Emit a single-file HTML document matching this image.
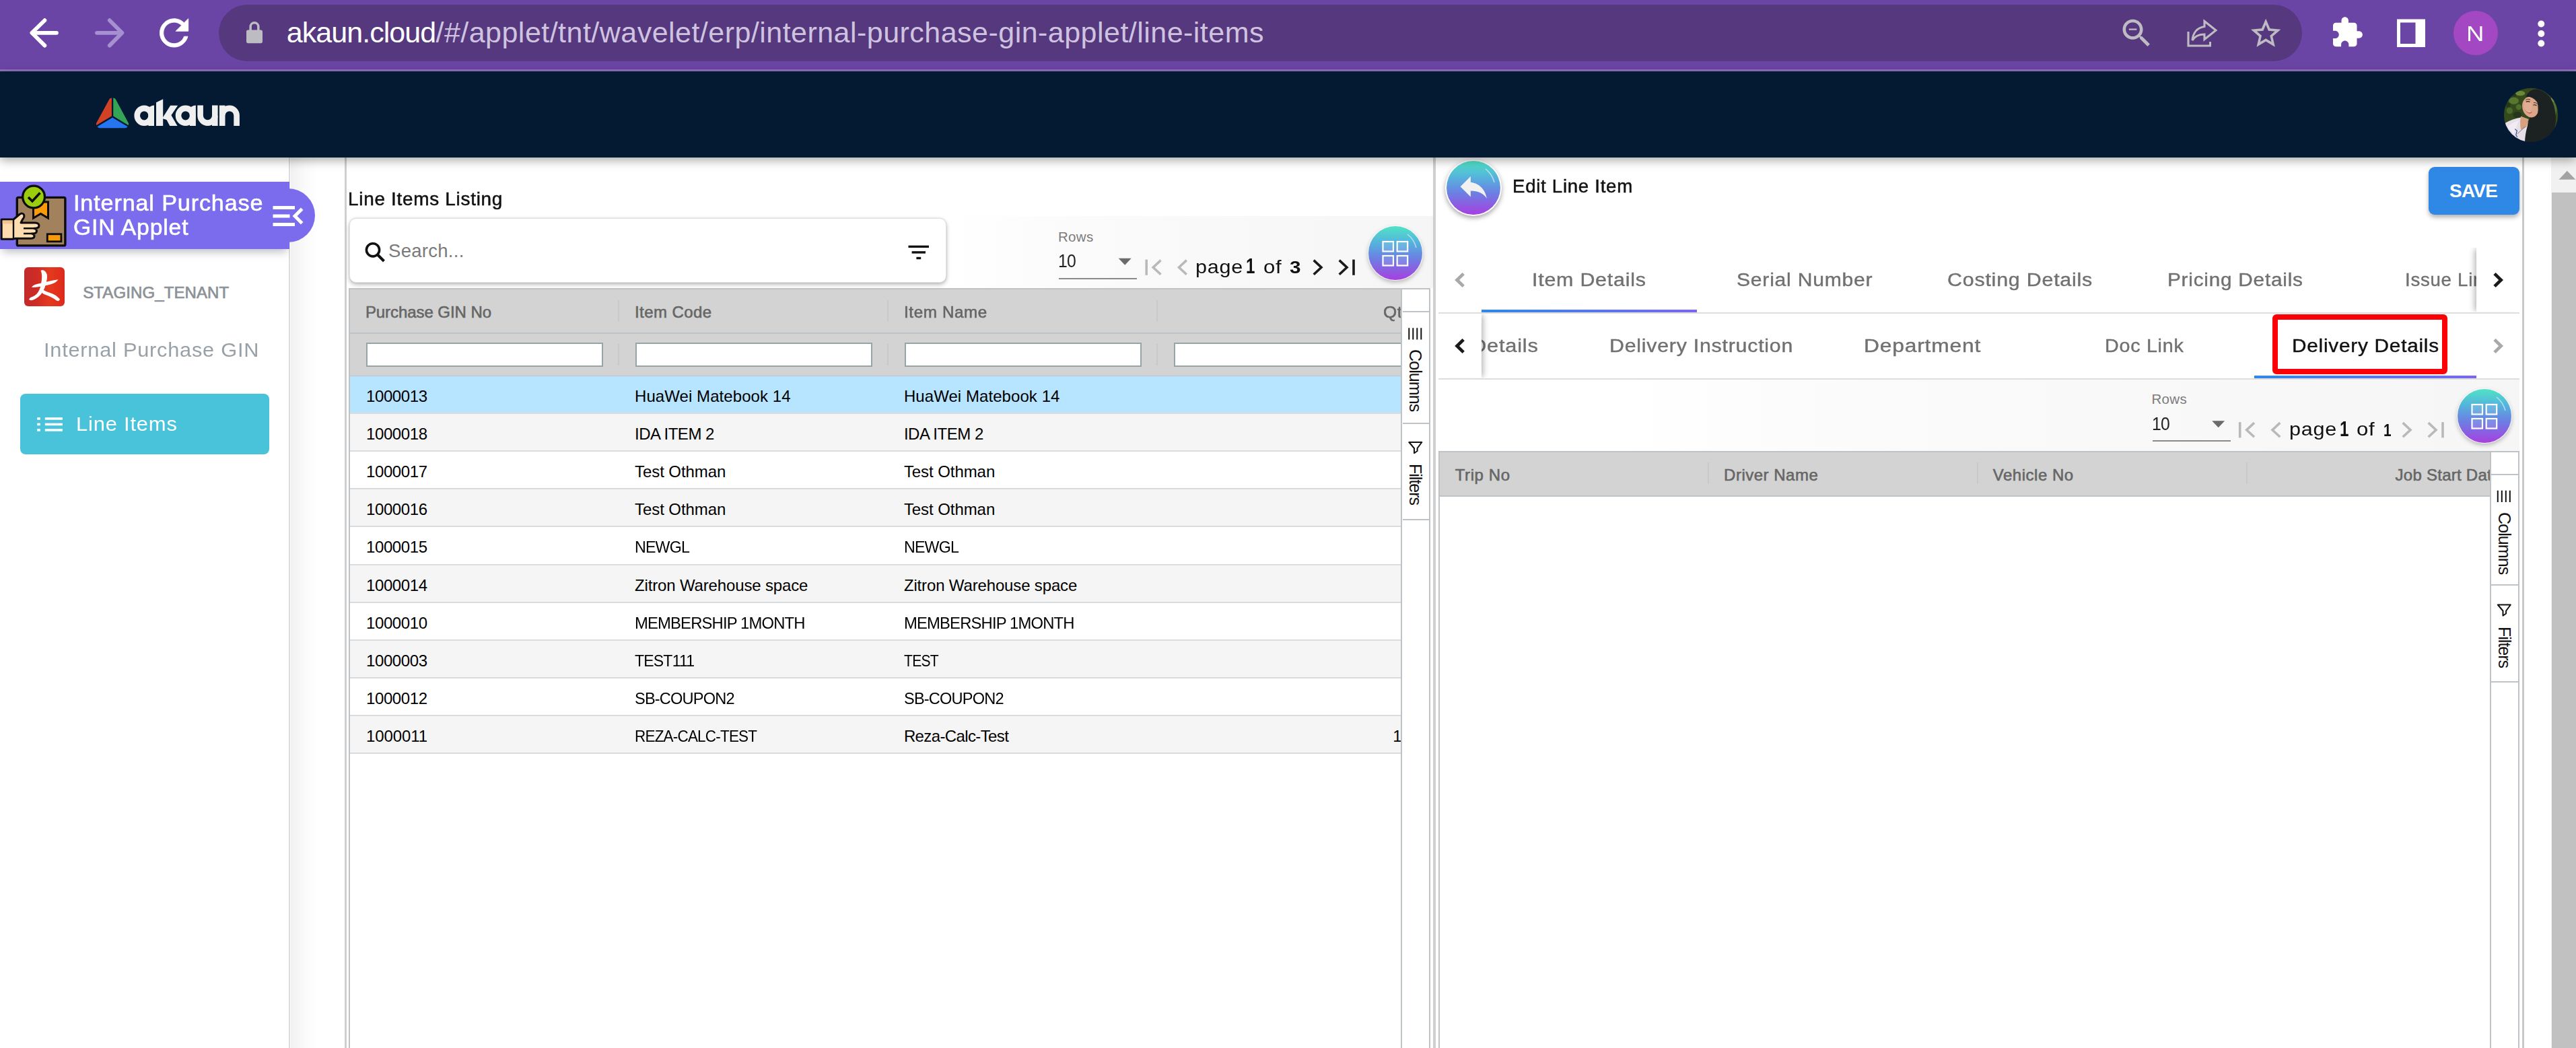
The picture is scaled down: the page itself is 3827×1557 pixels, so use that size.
<!DOCTYPE html>
<html><head><meta charset="utf-8"><title>akaun</title>
<style>
html,body{margin:0;padding:0;}
html{width:3827px;height:1557px;overflow:hidden;}
body{width:3827px;height:1557px;overflow:hidden;position:relative;background:#fff;font-family:"Liberation Sans",sans-serif;}
.a{position:absolute;box-sizing:border-box;}
.t{position:absolute;transform-origin:0 50%;white-space:pre;line-height:1;z-index:2;font-family:"Liberation Sans",sans-serif;}
.ov{z-index:3;}
svg{position:absolute;overflow:visible;}
/* browser */
#chrome{left:0;top:0;width:3827px;height:103px;background:#6b45a5;}
#chromeline{left:0;top:103px;width:3827px;height:3px;background:#9072c0;}
#pill{left:325px;top:7px;width:3095px;height:84.3px;border-radius:42.2px;background:#55387d;}
#prof{left:3645px;top:16px;width:66px;height:66px;border-radius:33px;background:#a347c2;}
/* header */
#hdr{left:0;top:106px;width:3827px;height:128px;background:#041a33;z-index:5;box-shadow:0 4px 14px rgba(0,0,0,.35);}
/* sidebar */
#side{left:0;top:234px;width:431px;height:1323px;background:#fff;border-right:2px solid #dcdcdc;}
#gutter{left:432px;top:234px;width:81px;height:1323px;background:linear-gradient(to right,#f1f1f1 0,#fbfbfb 22px,#fff 40px);}
#gline{left:512px;top:234px;width:3px;height:1323px;background:#cfcfcf;}
#apbar{left:0;top:270px;width:430px;height:99.5px;background:#7a6cec;box-shadow:0 8px 12px -4px rgba(60,60,90,.35);z-index:4;clip-path:inset(0 0 -30px 0);}
#appill{left:380px;top:280px;width:88px;height:80px;border-radius:0 40px 40px 0;background:#7a6cec;z-index:4;}
#tenant{left:36px;top:397px;width:60px;height:57.5px;border-radius:6px;background:linear-gradient(90deg,#c12a2c 0,#cf2b24 30%,#e33a1f 62%,#e2301c 85%,#d82a1e 100%);}
#libtn{left:30px;top:585px;width:370px;height:90.3px;border-radius:8px;background:#48c3da;}
/* left panel */
#search{left:519px;top:324px;width:886.5px;height:96px;border-radius:10px;background:#fff;border:1.5px solid #e2e2e2;box-shadow:0 3px 6px rgba(0,0,0,.26),0 0 3px rgba(0,0,0,.12);}
.pgbg{background:linear-gradient(to right,#ffffff 0,#fafafa 35%,#f6f6f6 100%);}
.uline{height:2px;background:#8a8a8a;}
.circ{width:80px;height:80px;border-radius:40px;background:linear-gradient(180deg,#4fe3c6 0%,#55b4dc 30%,#6c7fe3 60%,#a83fe0 100%);box-shadow:0 0 0 1.2px rgba(255,255,255,.75),0 3px 7px rgba(0,0,0,.3);}
/* grid */
.grid{border:2px solid #bdc3c7;background:#fff;}
.ghead{background:#d3d3d3;border-bottom:2px solid #bdc3c7;}
.sep{width:2px;background:#c4cacd;}
.finp{height:36px;border:2px solid #95a5a6;background:#fff;}
.row{left:520px;width:1563px;height:56.2px;border-bottom:2px solid #d9dcde;}
.odd{background:#f5f5f5;}
.sel{background:#b7e4ff;}
.sbar{background:#fff;border-left:2px solid #bdc3c7;}
.sline{height:2px;background:#bdc3c7;}
.vt{position:absolute;writing-mode:vertical-rl;white-space:pre;line-height:1;font-size:25px;color:#111;font-family:"Liberation Sans",sans-serif;}
/* right panel */
#save{left:3608px;top:248px;width:135px;height:71px;border-radius:9px;background:#3088e6;box-shadow:0 4px 6px rgba(0,0,0,.3);}
.tline{height:2px;background:#dedede;}
.ink{height:4px;background:linear-gradient(to right,#3088e6,#7a68ec);}
#redbox{left:3376px;top:467px;width:260px;height:89.2px;border:8.8px solid #fb0007;border-radius:6px;z-index:4;}

</style></head>
<body>
<!-- ===== browser chrome ===== -->
<div class="a" id="chrome"></div>
<div class="a" id="chromeline"></div>
<div class="a" id="pill"></div>
<svg style="left:0;top:0" width="3827" height="106" viewBox="0 0 3827 106">
  <!-- back -->
  <g fill="none" stroke="#ffffff" stroke-width="5.8" stroke-linecap="round" stroke-linejoin="round"><path d="M84 48.8 H48"/><path d="M66.4 30.2 L47.4 48.8 L66.4 67.6"/></g>
  <!-- forward -->
  <g fill="none" stroke="#a690d1" stroke-width="5.8" stroke-linecap="round" stroke-linejoin="round"><path d="M144 48.8 H180"/><path d="M162.8 30.2 L181.4 48.8 L162.8 67.6"/></g>
  <!-- reload -->
  <g transform="translate(226.9,17.2) scale(2.64)" fill="#ffffff" stroke="#ffffff" stroke-width="0.35" stroke-linejoin="round"><path d="M17.65 6.35C16.2 4.9 14.21 4 12 4c-4.42 0-7.99 3.58-7.99 8s3.57 8 7.99 8c3.73 0 6.84-2.55 7.73-6h-2.08c-.82 2.33-3.04 4-5.65 4-3.31 0-6-2.69-6-6s2.69-6 6-6c1.66 0 3.14.69 4.22 1.78L13 11h7V4l-2.35 2.35z"/></g>
  <!-- lock -->
  <g fill="#bdbcc3"><rect x="366" y="44.6" width="24" height="19.6" rx="2.6"/><path d="M370.4 45.5 v-6 a7.6 7.6 0 0 1 15.2 0 V45.5 h-3.5 v-6 a4.1 4.1 0 0 0 -8.2 0 V45.5z"/></g>
  <!-- zoom out -->
  <g transform="translate(3146.6,21.7) scale(2.31)" fill="#bfbbc4"><path d="M15.5 14h-.79l-.28-.27C15.41 12.59 16 11.11 16 9.5 16 5.91 13.09 3 9.5 3S3 5.91 3 9.5 5.91 16 9.5 16c1.61 0 3.09-.59 4.23-1.57l.27.28v.79l5 4.99L20.49 19l-4.99-5zm-6 0C7.01 14 5 11.99 5 9.5S7.01 5 9.5 5 14 7.01 14 9.5 11.99 14 9.5 14zM7 9h5v1H7z"/></g>
  <!-- share -->
  <g fill="none" stroke="#bfbbc4" stroke-width="3.1" stroke-linejoin="miter"><path d="M3251 47 V68 H3283.5 V62"/><path d="M3275 31.5 L3292 45 L3275 58.5 V51 C3266 51 3260.5 54 3257 60 C3258 49 3264 41 3275 39.5 Z"/></g>
  <!-- star -->
  <g transform="translate(3339.6,23.2) scale(2.215)" fill="#bfbbc4"><path d="M22 9.24l-7.19-.62L12 2 9.19 8.63 2 9.24l5.46 4.73L5.82 21 12 17.27 18.18 21l-1.63-7.03L22 9.24zM12 15.4l-3.76 2.27 1-4.28-3.32-2.88 4.38-.38L12 6.1l1.71 4.04 4.38.38-3.32 2.88 1 4.28L12 15.4z"/></g>
  <!-- extensions -->
  <g transform="translate(3461.8,23.2) scale(2.09)" fill="#ffffff"><path d="M20.5 11H19V7c0-1.1-.9-2-2-2h-4V3.5C13 2.12 11.88 1 10.5 1S8 2.12 8 3.5V5H4c-1.1 0-1.99.9-1.99 2v3.8H3.5c1.49 0 2.7 1.21 2.7 2.7s-1.21 2.7-2.7 2.7H2V20c0 1.1.9 2 2 2h3.8v-1.5c0-1.49 1.21-2.7 2.7-2.7 1.49 0 2.7 1.21 2.7 2.7V22H17c1.1 0 2-.9 2-2v-4h1.5c1.38 0 2.5-1.12 2.5-2.5S21.88 11 20.5 11z"/></g>
  <!-- side panel -->
  <rect x="3561" y="28.5" width="42" height="41.5" fill="#ffffff"/><rect x="3566" y="33.5" width="22.5" height="31.5" fill="#6b45a5"/>
  <!-- menu dots -->
  <g fill="#ffffff"><circle cx="3775.3" cy="35.5" r="5"/><circle cx="3775.3" cy="50" r="5"/><circle cx="3775.3" cy="64.5" r="5"/></g>
</svg>
<div class="a" id="prof"></div>

<!-- ===== app header ===== -->
<div class="a" id="hdr">
  <svg style="left:0;top:0" width="3827" height="128" viewBox="0 106 3827 128">
    <!-- logo triangle -->
    <g stroke="#041a33" stroke-width="1.3" stroke-linejoin="round">
    <path d="M166.6 144.9 Q163.5 144.3 161.8 147.3 L142.6 182.5 Q141.3 185.6 143.8 186.6 L166.6 172.8 Z" fill="#d14124"/>
    <path d="M167.6 144.9 Q170.7 144.3 172.4 147.3 L191.4 182.5 Q192.7 185.6 190.2 186.6 L167.6 172.8 Z" fill="#34a457"/>
    <path d="M167.1 173.9 L144 187.6 Q144.5 190.8 148.5 190.9 L185.7 190.9 Q189.7 190.8 190.2 187.6 Z" fill="#2575f0"/>
    </g>
    <!-- logo text -->
    <defs><clipPath id="xh"><rect x="190" y="156.6" width="180" height="30.4"/></clipPath></defs>
    <g fill="none" stroke="#efefef" stroke-width="8.6">
      <ellipse cx="214.2" cy="171.8" rx="10.5" ry="10.9"/>
      <ellipse cx="275.6" cy="171.8" rx="10.6" ry="10.9"/>
      <path d="M297.6 156.6 V171.75 A10.85 10.85 0 0 0 319.3 171.75 V156.6"/>
      <path d="M330.2 187 V171.75 A10.7 10.85 0 0 1 351.6 171.75 V187"/>
    </g>
    <g fill="#efefef">
      <path d="M220.4 187 V164 Q222 156.6 229 156.6 V187 Z"/>
      <path d="M281.9 187 V164 Q283.5 156.6 290.9 156.6 V187 Z"/>
      <rect x="315" y="172" width="8.6" height="15"/>
      <rect x="325.9" y="156.6" width="8.6" height="14"/>
      <path d="M232 187 V152.2 L242.2 147.2 V187 Z"/>
      <g clip-path="url(#xh)"><path d="M241 176 L253.3 156.6 H264.3 L249.3 178.5 Z"/><path d="M244 171.5 L251.5 166 L263.5 187 H252.3 Z"/></g>
    </g>
    <!-- avatar -->
    <defs><clipPath id="avc"><circle cx="572.5" cy="532.5" r="382.5"/></clipPath>
    <filter id="avb" x="-5%" y="-5%" width="110%" height="110%"><feGaussianBlur stdDeviation="5"/></filter></defs>
    <g transform="translate(3700,115) scale(0.10493)"><g clip-path="url(#avc)"><g filter="url(#avb)">
      <rect x="150" y="120" width="860" height="840" fill="#34491f"/>
      <ellipse cx="330" cy="330" rx="70" ry="50" fill="#58772f"/>
      <ellipse cx="420" cy="225" rx="70" ry="35" fill="#6a8a38"/>
      <ellipse cx="270" cy="470" rx="45" ry="45" fill="#4b692b"/>
      <ellipse cx="400" cy="420" rx="40" ry="40" fill="#4f6f2c"/>
      <ellipse cx="380" cy="530" rx="60" ry="45" fill="#26361a"/>
      <ellipse cx="250" cy="390" rx="35" ry="35" fill="#28391b"/>
      <ellipse cx="330" cy="250" rx="35" ry="25" fill="#27381a"/>
      <ellipse cx="905" cy="430" rx="35" ry="110" fill="#4f6f30"/>
      <ellipse cx="885" cy="310" rx="30" ry="40" fill="#6f9040"/>
      <path d="M200 650 Q300 590 440 565 L530 640 L500 930 L280 930 Q210 790 200 650 Z" fill="#e6dfe8"/>
      <path d="M240 700 Q300 640 400 610 L330 800 Z" fill="#f1ecf3"/>
      <path d="M430 550 L540 590 L510 700 L430 740 Q410 640 430 550 Z" fill="#d7a081"/>
      <path d="M500 270 Q560 150 670 168 Q800 200 872 330 Q935 480 922 640 Q900 790 820 870 L640 930 L485 930 Q490 800 520 700 Q540 620 560 560 L600 300 Z" fill="#1d2024"/>
      <ellipse cx="566" cy="420" rx="116" ry="148" transform="rotate(-12 566 420)" fill="#dba587"/>
      <ellipse cx="530" cy="410" rx="55" ry="80" transform="rotate(-12 530 410)" fill="#e2ae91"/>
      <path d="M498 272 Q590 205 700 320 L715 580 L655 585 Q690 440 660 350 Q600 268 498 272 Z" fill="#1d2024"/>
      <path d="M503 348 q27 -16 54 0" stroke="#2a1c18" stroke-width="11" fill="none"/>
      <path d="M606 392 q25 -10 46 8" stroke="#2a1c18" stroke-width="11" fill="none"/>
      <path d="M498 318 q32 -20 66 -2" stroke="#2a1c18" stroke-width="8" fill="none"/>
      <path d="M610 358 q28 -6 50 16" stroke="#2a1c18" stroke-width="8" fill="none"/>
      <path d="M486 450 Q530 502 594 488 Q545 545 486 450 Z" fill="#c4474c"/>
      <path d="M497 459 Q535 496 584 487 Q540 514 497 459 Z" fill="#fbf3ee"/>
      <path d="M345 730 l30 25 l-15 60 l20 30" stroke="#2c3f7a" stroke-width="10" fill="none"/>
      <path d="M380 800 Q440 740 490 700" stroke="#39405a" stroke-width="6" fill="none"/>
    </g></g></g>
  </svg>
</div>

<!-- ===== sidebar ===== -->
<div class="a" id="side"></div>
<div class="a" id="gutter"></div>
<div class="a" id="gline"></div>
<div class="a" id="appill"></div>
<div class="a" id="apbar"></div>
<svg style="left:0;top:268px;z-index:4" width="110" height="104" viewBox="0 268 110 104">
  <!-- package -->
  <rect x="25.3" y="293.4" width="71.6" height="71.5" rx="2" fill="#a1825c" stroke="#0d0d0d" stroke-width="3.4"/>
  <path d="M49.5 300 h22 v24 l-11 -6.5 l-11 6.5z" fill="#f99a0a" stroke="#0d0d0d" stroke-width="3"/>
  <rect x="70.3" y="347.8" width="20.6" height="11" fill="#f99a0a" stroke="#0d0d0d" stroke-width="2.8"/>
  <circle cx="50.1" cy="292.5" r="16.4" fill="#9acd0d" stroke="#0d0d0d" stroke-width="3.3"/>
  <path d="M42 293 l6 6 l11.5 -12.5" fill="none" stroke="#0d0d0d" stroke-width="3.6"/>
  <!-- hand -->
  <path d="M2.2 326 H20 L29 318.5 Q33.5 315.5 35.5 319 Q37 322 33.5 326 L31 331 H52 Q58 331.5 58 335.2 Q58 339 52 339.3 H50.5 Q54.5 340 54.5 343.3 Q54.5 346.8 49.5 347 H47.5 Q51.5 348 51 351.2 Q50.5 354.3 45.5 354.3 H23 L19 355.2 H2.2 Z" fill="#fddcb0" stroke="#0d0d0d" stroke-width="3" stroke-linejoin="round"/>
  <path d="M3.7 327.5 H20 V332.5 H3.7z" fill="#f3c391"/>
  <path d="M35 339.3 H50.5 M35 347 H47.5 M20 326 V355" fill="none" stroke="#0d0d0d" stroke-width="2.4"/>
</svg>
<svg style="left:398.3px;top:290.9px;z-index:4" width="60" height="60" viewBox="0 0 24 24"><path fill="#ffffff" d="M3 18h13v-2H3v2zm0-5h10v-2H3v2zm0-7v2h13V6H3zm18 9.59L17.42 12 21 8.41 19.59 7l-5 5 5 5L21 15.59z"/></svg>
<div class="a" id="tenant"></div>
<svg style="left:36px;top:396.5px" width="60" height="58" viewBox="0 0 60 58">
  <g fill="#ffffff">
    <path d="M24.5 5 Q28 3.2 31.5 6.5 Q34.5 10 34 15.5 Q33.8 18.5 32.8 21.8 Q41.5 19.5 50.5 18.2 Q47 23.5 39 25.5 Q35 26.5 31.5 27.3 Q30.5 31 28.8 34 Q33 36.5 38 38 Q47 40.5 53 47.5 Q52 51.5 48 49.5 Q40 43.5 30.5 40.5 Q28 39.8 26.5 38 Q22 45 13.5 48.5 Q9 50 7 48 Q8.5 44.5 12 44 Q19 41.5 22.5 33.5 Q23.5 31 24.2 28.8 Q17.5 30.2 11 29.8 Q13.5 26 19 25 Q22.5 24.3 25.2 23.6 Q26.5 17.5 26.2 12 Q26 8 24.5 5 Z"/>
  </g>
</svg>
<div class="a" id="libtn"></div>
<svg style="left:0;top:0" width="431" height="700" viewBox="0 0 431 700">
  <g fill="#ffffff">
    <rect x="55.2" y="620.2" width="4.6" height="3.5"/><rect x="66.8" y="620.2" width="26.2" height="3.5"/>
    <rect x="55.2" y="628.7" width="4.6" height="3.5"/><rect x="66.8" y="628.7" width="26.2" height="3.5"/>
    <rect x="55.2" y="637.2" width="4.6" height="3.5"/><rect x="66.8" y="637.2" width="26.2" height="3.5"/>
  </g>
</svg>

<!-- ===== left panel ===== -->
<div class="a pgbg" style="left:1405px;top:321px;width:720px;height:108px;"></div>
<div class="a pgbg" style="left:2400px;top:563.5px;width:1343px;height:107px;"></div>
<div class="a" id="search"></div>
<svg style="left:0;top:0" width="3827" height="1557" viewBox="0 0 3827 1557">
  <!-- search icon -->
  <circle cx="554" cy="371.3" r="9.6" fill="none" stroke="#111" stroke-width="3.6"/>
  <path d="M561 378.5 L570.5 388" stroke="#111" stroke-width="4" fill="none"/>
  <!-- filter list icon -->
  <g fill="#111"><rect x="1349.5" y="364.7" width="30.5" height="3.4"/><rect x="1354.6" y="373.2" width="20.4" height="3.4"/><rect x="1361.4" y="381.8" width="6.8" height="3.4"/></g>
  <!-- pager 1 -->
  <path d="M1661.7 383.7 h19 l-9.5 10z" fill="#6b6b6b"/>
  <g fill="none" stroke-width="3.6">
    <path d="M1703.2 385.6 V408.8" stroke="#b9b9b9"/><path d="M1724.5 386.6 L1713.2 397.2 L1724.5 407.8" stroke="#b9b9b9"/><path d="M1762.8 386.6 L1751.5 397.2 L1762.8 407.8" stroke="#b9b9b9"/><path d="M1951.7 386.6 L1963.0 397.2 L1951.7 407.8" stroke="#1a1a1a"/><path d="M1989.7 386.6 L2001.0 397.2 L1989.7 407.8" stroke="#1a1a1a"/><path d="M2011.0 385.6 V408.8" stroke="#1a1a1a"/>
  </g>
  <!-- pager 2 -->
  <path d="M3286.2 625.2 h19 l-9.5 10z" fill="#6b6b6b"/>
  <g fill="none" stroke-width="3.6">
    <path d="M3327.7 627.1 V650.3" stroke="#b9b9b9"/><path d="M3349.0 628.1 L3337.7 638.7 L3349.0 649.3" stroke="#b9b9b9"/><path d="M3387.3 628.1 L3376.0 638.7 L3387.3 649.3" stroke="#b9b9b9"/><path d="M3569.7 628.1 L3581.0 638.7 L3569.7 649.3" stroke="#b9b9b9"/><path d="M3607.7 628.1 L3619.0 638.7 L3607.7 649.3" stroke="#b9b9b9"/><path d="M3629.0 627.1 V650.3" stroke="#b9b9b9"/>
  </g>
</svg>
<div class="a uline" style="left:1573px;top:412.5px;width:116px;"></div>
<div class="a circ" style="left:2033px;top:336px;"></div>
<svg style="left:2033px;top:336px" width="80" height="80" viewBox="0 0 80 80">
  <g fill="rgba(255,255,255,.12)" stroke="#ffffff" stroke-width="2.2"><rect x="21.5" y="23" width="15.5" height="14.5"/><rect x="42.7" y="23" width="15.5" height="14.5"/><rect x="21.5" y="44" width="15.5" height="14.5"/><rect x="42.7" y="44" width="15.5" height="14.5"/></g>
  <path d="M58 12 Q68 20 71 32" fill="none" stroke="rgba(255,255,255,.55)" stroke-width="1.6"/>
</svg>

<!-- left grid -->
<div class="a grid" style="left:518px;top:428px;width:1607px;height:1129px;border-bottom:none;"></div>
<div class="a ghead" style="left:520px;top:430px;width:1563px;height:65.5px;"></div>
<div class="a ghead" style="left:520px;top:495.5px;width:1563px;height:64.5px;"></div>
<div class="a sep" style="left:918px;top:445.5px;height:32px;"></div>
<div class="a sep" style="left:1318px;top:445.5px;height:32px;"></div>
<div class="a sep" style="left:1718px;top:445.5px;height:32px;"></div>
<div class="a sep" style="left:918px;top:511px;height:32px;"></div>
<div class="a sep" style="left:1318px;top:511px;height:32px;"></div>
<div class="a sep" style="left:1718px;top:511px;height:32px;"></div>
<div class="a finp" style="left:544px;top:509.3px;width:352px;"></div>
<div class="a finp" style="left:944px;top:509.3px;width:352px;"></div>
<div class="a finp" style="left:1344px;top:509.3px;width:352px;"></div>
<div class="a finp" style="left:1744px;top:509.3px;width:352px;"></div>
<div class="a row sel" style="top:559.0px;"></div>
<div class="a row odd" style="top:615.1px;"></div>
<div class="a row" style="top:671.2px;"></div>
<div class="a row odd" style="top:727.3px;"></div>
<div class="a row" style="top:783.4px;"></div>
<div class="a row odd" style="top:839.5px;"></div>
<div class="a row" style="top:895.6px;"></div>
<div class="a row odd" style="top:951.7px;"></div>
<div class="a row" style="top:1007.8px;"></div>
<div class="a row odd" style="top:1063.9px;"></div>
<!-- left grid sidebar -->
<div class="a sbar ov" style="left:2081px;top:430px;width:42px;height:1127px;"></div>
<div class="a sline ov" style="left:2084px;top:461.5px;width:39px;"></div>
<div class="a sline ov" style="left:2084px;top:627.5px;width:39px;"></div>
<div class="a sline ov" style="left:2084px;top:771px;width:39px;"></div>
<svg class="ov" style="left:2084px;top:431px" width="39" height="400" viewBox="2084 431 39 400">
  <g stroke="#111" stroke-width="2" fill="none">
    <path d="M2093.3 487.2 V504.6 M2099.3 487.2 V504.6 M2105.3 487.2 V504.6 M2111.3 487.2 V504.6"/>
    <path d="M2093.3 657 H2112.3 L2105.6 666 V670 L2101 673.2 V666 Z" stroke-linejoin="round"/>
  </g>
</svg>
<span class="vt ov" style="left:2090px;top:519px;letter-spacing:-0.9px;">Columns</span>
<span class="vt ov" style="left:2090px;top:689px;letter-spacing:-1px;">Filters</span>

<!-- ===== panel divider ===== -->
<div class="a" style="left:2125px;top:321px;width:4.5px;height:107px;background:#f4f4f4;"></div>
<div class="a" style="left:2129.3px;top:234px;width:3.7px;height:1323px;background:#cfcfcf;"></div>

<!-- ===== right panel ===== -->
<div class="a" style="left:2147px;top:237px;width:84px;height:84px;border-radius:42px;background:#fff;box-shadow:0 3px 7px rgba(0,0,0,.35);"></div>
<div class="a circ" style="left:2149px;top:238.5px;box-shadow:none;"></div>
<svg style="left:2162.9px;top:250.7px" width="52.5" height="52.5" viewBox="0 0 24 24"><path fill="#f1f1f1" d="M10 9V5l-7 7 7 7v-4.1c5 0 8.5 1.6 11 5.1-1-5-4-10-11-11z"/></svg>
<svg style="left:2149px;top:238.5px" width="80" height="80" viewBox="0 0 80 80"><path d="M58 12 Q68 20 71 32" fill="none" stroke="rgba(255,255,255,.55)" stroke-width="1.6"/></svg>
<div class="a" id="save"></div>

<!-- tabs row 1 -->
<div class="a tline" style="left:2137px;top:463.5px;width:1606px;"></div>
<div class="a ink" style="left:2201px;top:460px;width:320px;"></div>
<!-- tabs row 2 -->
<div class="a tline" style="left:2137px;top:561.5px;width:1606px;"></div>
<div class="a ink" style="left:3349px;top:557.8px;width:330px;"></div>
<div class="a" id="redbox"></div>
<!-- tab pagination controls -->
<div class="a ov" style="left:2137px;top:368px;width:64px;height:95.5px;background:#fff;"></div>
<div class="a ov" style="left:3679px;top:368px;width:64px;height:95.5px;background:#fff;box-shadow:-4px 0 9px -2px rgba(0,0,0,.32);clip-path:inset(0 0 0 -16px);"></div>
<div class="a ov" style="left:2137px;top:466px;width:64px;height:95.5px;background:#fff;box-shadow:4px 0 9px -2px rgba(0,0,0,.32);clip-path:inset(0 -16px 0 0);"></div>
<div class="a ov" style="left:3679px;top:466px;width:64px;height:95.5px;background:#fff;"></div>
<svg class="ov" style="left:0;top:0" width="3827" height="600" viewBox="0 0 3827 600">
  <g fill="none" stroke-width="4.8">
    <path d="M2174.2 406.6 L2164.6 416 L2174.2 425.4" stroke="#a9a9a9"/>
    <path d="M3706 406.6 L3715.6 416 L3706 425.4" stroke="#1a1a1a"/>
    <path d="M2174.2 504.6 L2164.6 514 L2174.2 523.4" stroke="#1a1a1a"/>
    <path d="M3706 504.6 L3715.6 514 L3706 523.4" stroke="#a9a9a9"/>
  </g>
</svg>

<!-- pager 2 -->
<div class="a uline" style="left:3197.5px;top:654px;width:116px;"></div>
<div class="a circ" style="left:3651px;top:577.5px;"></div>
<svg style="left:3651px;top:577.5px" width="80" height="80" viewBox="0 0 80 80">
  <g fill="rgba(255,255,255,.12)" stroke="#ffffff" stroke-width="2.2"><rect x="21.5" y="23" width="15.5" height="14.5"/><rect x="42.7" y="23" width="15.5" height="14.5"/><rect x="21.5" y="44" width="15.5" height="14.5"/><rect x="42.7" y="44" width="15.5" height="14.5"/></g>
  <path d="M58 12 Q68 20 71 32" fill="none" stroke="rgba(255,255,255,.55)" stroke-width="1.6"/>
</svg>

<!-- right grid -->
<div class="a grid" style="left:2137px;top:669.5px;width:1606px;height:887.5px;border-bottom:none;"></div>
<div class="a ghead" style="left:2139px;top:671.5px;width:1562px;height:66px;"></div>
<div class="a sep" style="left:2537px;top:687px;height:32px;"></div>
<div class="a sep" style="left:2937px;top:687px;height:32px;"></div>
<div class="a sep" style="left:3337px;top:687px;height:32px;"></div>
<div class="a sbar ov" style="left:3698.5px;top:671.5px;width:42px;height:885.5px;"></div>
<div class="a sline ov" style="left:3701px;top:703.5px;width:40px;"></div>
<div class="a sline ov" style="left:3701px;top:868px;width:40px;"></div>
<div class="a sline ov" style="left:3701px;top:1012px;width:40px;"></div>
<svg class="ov" style="left:3701px;top:672px" width="40" height="400" viewBox="3701 672 40 400">
  <g stroke="#111" stroke-width="2" fill="none" transform="translate(1617.5,241.5)">
    <path d="M2093.3 487.2 V504.6 M2099.3 487.2 V504.6 M2105.3 487.2 V504.6 M2111.3 487.2 V504.6"/>
    <path d="M2093.3 657 H2112.3 L2105.6 666 V670 L2101 673.2 V666 Z" stroke-linejoin="round"/>
  </g>
</svg>
<span class="vt ov" style="left:3707.5px;top:760.5px;letter-spacing:-0.9px;">Columns</span>
<span class="vt ov" style="left:3707.5px;top:930.5px;letter-spacing:-1px;">Filters</span>

<!-- right panel border + scrollbar -->
<div class="a" style="left:3747px;top:234px;width:2.5px;height:1323px;background:#c8c8c8;"></div>
<div class="a" style="left:3789.5px;top:234px;width:37.5px;height:1323px;background:#f1f1f1;"></div>
<div class="a" style="left:3791px;top:285.5px;width:36px;height:1271.5px;background:#c1c1c1;"></div>
<svg style="left:3789px;top:234px" width="38" height="60" viewBox="3789 234 38 60"><path d="M3801.5 266.7 L3813.8 253.8 L3827 267.5 V266.7z" fill="#a3a3a3"/></svg>

<!-- text -->
<span class="t" style="left:425.8px;top:26.6px;font-size:43px;font-weight:400;color:#ffffff;letter-spacing:-0.95px;">akaun.cloud</span>
<span class="t" style="left:647.5px;top:26.6px;font-size:43px;font-weight:400;color:#cfc3e0;letter-spacing:0.47px;">/#/applet/tnt/wavelet/erp/internal-purchase-gin-applet/line-items</span>
<span class="t" style="left:3664.2px;top:34.8px;font-size:31px;font-weight:400;color:#ffffff;letter-spacing:0.00px;transform:scaleX(1.18);">N</span>
<span class="t" style="left:108.9px;top:285.5px;font-size:32.5px;font-weight:400;color:#ffffff;letter-spacing:0.81px;transform:scaleX(1.0516);z-index:6;-webkit-text-stroke:0.6px #fff;">Internal Purchase</span>
<span class="t" style="left:108.9px;top:321.5px;font-size:32.5px;font-weight:400;color:#ffffff;letter-spacing:0.81px;transform:scaleX(1.0369);z-index:6;-webkit-text-stroke:0.6px #fff;">GIN Applet</span>
<span class="t" style="left:123.2px;top:423.2px;font-size:24px;font-weight:400;color:#8b9197;letter-spacing:0.11px;-webkit-text-stroke:0.7px #8b9197;">STAGING_TENANT</span>
<span class="t" style="left:65.0px;top:505.0px;font-size:29.5px;font-weight:400;color:#97a1a7;letter-spacing:0.74px;transform:scaleX(1.0416);">Internal Purchase GIN</span>
<span class="t" style="left:112.5px;top:615.0px;font-size:29.5px;font-weight:400;color:#ffffff;letter-spacing:0.74px;transform:scaleX(1.0500);">Line Items</span>
<span class="t" style="left:516.6px;top:282.6px;font-size:27px;font-weight:400;color:#111;letter-spacing:0.68px;transform:scaleX(1.0345);-webkit-text-stroke:0.5px #111;">Line Items Listing</span>
<span class="t" style="left:577.1px;top:359.2px;font-size:27.5px;font-weight:400;color:#7a7a7a;letter-spacing:0.27px;">Search...</span>
<span class="t" style="left:1571.9px;top:341.6px;font-size:20.5px;font-weight:400;color:#7c7c7c;letter-spacing:0.35px;">Rows</span>
<span class="t" style="left:1572.1px;top:375.1px;font-size:27px;font-weight:400;color:#222;letter-spacing:-0.95px;transform:scaleX(0.9182);">10</span>
<span class="t" style="left:1776.1px;top:382.5px;font-size:28px;font-weight:400;color:#111;letter-spacing:0.70px;transform:scaleX(1.0914);">page</span>
<span class="t" style="left:1851.0px;top:380.0px;font-size:31px;font-weight:700;color:#111;letter-spacing:0.00px;transform:scaleX(0.78);">1</span>
<span class="t" style="left:1876.8px;top:382.5px;font-size:28px;font-weight:400;color:#111;letter-spacing:0.70px;transform:scaleX(1.1131);">of</span>
<span class="t" style="left:1915.6px;top:383.8px;font-size:26.5px;font-weight:700;color:#111;letter-spacing:0.00px;transform:scaleX(1.12);">3</span>
<span class="t" style="left:3196.4px;top:583.1px;font-size:20.5px;font-weight:400;color:#7c7c7c;letter-spacing:0.35px;">Rows</span>
<span class="t" style="left:3196.6px;top:616.6px;font-size:27px;font-weight:400;color:#222;letter-spacing:-0.95px;transform:scaleX(0.9182);">10</span>
<span class="t" style="left:3400.6px;top:624.0px;font-size:28px;font-weight:400;color:#111;letter-spacing:0.70px;transform:scaleX(1.0914);">page</span>
<span class="t" style="left:3475.5px;top:621.5px;font-size:31px;font-weight:700;color:#111;letter-spacing:0.00px;transform:scaleX(0.78);">1</span>
<span class="t" style="left:3501.3px;top:624.0px;font-size:28px;font-weight:400;color:#111;letter-spacing:0.70px;transform:scaleX(1.1131);">of</span>
<span class="t" style="left:3540.7px;top:625.7px;font-size:26px;font-weight:700;color:#111;letter-spacing:0.00px;transform:scaleX(0.8);">1</span>
<span class="t" style="left:542.9px;top:451.7px;font-size:24px;font-weight:400;color:#666666;letter-spacing:-0.07px;-webkit-text-stroke:0.6px #666666;">Purchase GIN No</span>
<span class="t" style="left:942.9px;top:451.7px;font-size:24px;font-weight:400;color:#666666;letter-spacing:0.45px;-webkit-text-stroke:0.6px #666666;">Item Code</span>
<span class="t" style="left:1342.9px;top:451.7px;font-size:24px;font-weight:400;color:#666666;letter-spacing:0.60px;transform:scaleX(1.0095);-webkit-text-stroke:0.6px #666666;">Item Name</span>
<span class="t" style="left:2055.2px;top:451.7px;font-size:24px;font-weight:400;color:#666666;letter-spacing:0.60px;transform:scaleX(1.0808);-webkit-text-stroke:0.6px #666666;">Qt</span>
<span class="t" style="left:544.0px;top:577.0px;font-size:24px;font-weight:400;color:#000;letter-spacing:-0.40px;">1000013</span>
<span class="t" style="left:943.0px;top:577.0px;font-size:24px;font-weight:400;color:#000;letter-spacing:0.07px;">HuaWei Matebook 14</span>
<span class="t" style="left:1342.9px;top:577.0px;font-size:24px;font-weight:400;color:#000;letter-spacing:0.07px;">HuaWei Matebook 14</span>
<span class="t" style="left:544.0px;top:633.1px;font-size:24px;font-weight:400;color:#000;letter-spacing:-0.40px;">1000018</span>
<span class="t" style="left:943.0px;top:633.1px;font-size:24px;font-weight:400;color:#000;letter-spacing:-0.47px;">IDA ITEM 2</span>
<span class="t" style="left:1342.9px;top:633.1px;font-size:24px;font-weight:400;color:#000;letter-spacing:-0.47px;">IDA ITEM 2</span>
<span class="t" style="left:544.0px;top:689.2px;font-size:24px;font-weight:400;color:#000;letter-spacing:-0.40px;">1000017</span>
<span class="t" style="left:943.0px;top:689.2px;font-size:24px;font-weight:400;color:#000;letter-spacing:-0.07px;">Test Othman</span>
<span class="t" style="left:1342.9px;top:689.2px;font-size:24px;font-weight:400;color:#000;letter-spacing:-0.07px;">Test Othman</span>
<span class="t" style="left:544.0px;top:745.3px;font-size:24px;font-weight:400;color:#000;letter-spacing:-0.40px;">1000016</span>
<span class="t" style="left:943.0px;top:745.3px;font-size:24px;font-weight:400;color:#000;letter-spacing:-0.07px;">Test Othman</span>
<span class="t" style="left:1342.9px;top:745.3px;font-size:24px;font-weight:400;color:#000;letter-spacing:-0.07px;">Test Othman</span>
<span class="t" style="left:544.0px;top:801.4px;font-size:24px;font-weight:400;color:#000;letter-spacing:-0.40px;">1000015</span>
<span class="t" style="left:943.0px;top:801.4px;font-size:24px;font-weight:400;color:#000;letter-spacing:-0.84px;transform:scaleX(0.9667);">NEWGL</span>
<span class="t" style="left:1342.9px;top:801.4px;font-size:24px;font-weight:400;color:#000;letter-spacing:-0.84px;transform:scaleX(0.9667);">NEWGL</span>
<span class="t" style="left:544.0px;top:857.5px;font-size:24px;font-weight:400;color:#000;letter-spacing:-0.40px;">1000014</span>
<span class="t" style="left:943.0px;top:857.5px;font-size:24px;font-weight:400;color:#000;letter-spacing:-0.15px;">Zitron Warehouse space</span>
<span class="t" style="left:1342.9px;top:857.5px;font-size:24px;font-weight:400;color:#000;letter-spacing:-0.15px;">Zitron Warehouse space</span>
<span class="t" style="left:544.0px;top:913.6px;font-size:24px;font-weight:400;color:#000;letter-spacing:-0.40px;">1000010</span>
<span class="t" style="left:943.0px;top:913.6px;font-size:24px;font-weight:400;color:#000;letter-spacing:-0.84px;transform:scaleX(0.9920);">MEMBERSHIP 1MONTH</span>
<span class="t" style="left:1342.9px;top:913.6px;font-size:24px;font-weight:400;color:#000;letter-spacing:-0.84px;transform:scaleX(0.9920);">MEMBERSHIP 1MONTH</span>
<span class="t" style="left:544.0px;top:969.7px;font-size:24px;font-weight:400;color:#000;letter-spacing:-0.40px;">1000003</span>
<span class="t" style="left:943.0px;top:969.7px;font-size:24px;font-weight:400;color:#000;letter-spacing:-0.84px;transform:scaleX(0.9596);">TEST111</span>
<span class="t" style="left:1342.9px;top:969.7px;font-size:24px;font-weight:400;color:#000;letter-spacing:-0.84px;transform:scaleX(0.8796);">TEST</span>
<span class="t" style="left:544.0px;top:1025.8px;font-size:24px;font-weight:400;color:#000;letter-spacing:-0.40px;">1000012</span>
<span class="t" style="left:943.0px;top:1025.8px;font-size:24px;font-weight:400;color:#000;letter-spacing:-0.84px;transform:scaleX(0.9834);">SB-COUPON2</span>
<span class="t" style="left:1342.9px;top:1025.8px;font-size:24px;font-weight:400;color:#000;letter-spacing:-0.84px;transform:scaleX(0.9834);">SB-COUPON2</span>
<span class="t" style="left:544.0px;top:1081.9px;font-size:24px;font-weight:400;color:#000;letter-spacing:-0.10px;">1000011</span>
<span class="t" style="left:943.0px;top:1081.9px;font-size:24px;font-weight:400;color:#000;letter-spacing:-0.84px;transform:scaleX(0.9362);">REZA-CALC-TEST</span>
<span class="t" style="left:1342.9px;top:1081.9px;font-size:24px;font-weight:400;color:#000;letter-spacing:-0.62px;">Reza-Calc-Test</span>
<span class="t" style="left:2069.2px;top:1081.9px;font-size:24px;font-weight:400;color:#000;letter-spacing:0.00px;">1</span>
<span class="t" style="left:2246.5px;top:263.7px;font-size:27px;font-weight:400;color:#111;letter-spacing:0.68px;transform:scaleX(1.0245);-webkit-text-stroke:0.5px #111;">Edit Line Item</span>
<span class="t" style="left:3639.1px;top:269.6px;font-size:28px;font-weight:700;color:#ffffff;letter-spacing:-0.80px;">SAVE</span>
<span class="t" style="left:2275.5px;top:403.0px;font-size:27px;font-weight:400;color:#717171;letter-spacing:0.68px;transform:scaleX(1.1257);-webkit-text-stroke:0.4px #717171;">Item Details</span>
<span class="t" style="left:2579.6px;top:403.0px;font-size:27px;font-weight:400;color:#717171;letter-spacing:0.68px;transform:scaleX(1.1155);-webkit-text-stroke:0.4px #717171;">Serial Number</span>
<span class="t" style="left:2892.6px;top:403.0px;font-size:27px;font-weight:400;color:#717171;letter-spacing:0.68px;transform:scaleX(1.1266);-webkit-text-stroke:0.4px #717171;">Costing Details</span>
<span class="t" style="left:3220.1px;top:403.0px;font-size:27px;font-weight:400;color:#717171;letter-spacing:0.68px;transform:scaleX(1.1033);-webkit-text-stroke:0.4px #717171;">Pricing Details</span>
<span class="t" style="left:3572.9px;top:403.0px;font-size:27px;font-weight:400;color:#717171;letter-spacing:0.68px;transform:scaleX(1.0256);-webkit-text-stroke:0.4px #717171;">Issue Link</span>
<span class="t" style="left:2185.9px;top:500.7px;font-size:27px;font-weight:400;color:#717171;letter-spacing:0.68px;transform:scaleX(1.1414);-webkit-text-stroke:0.4px #717171;">Details</span>
<span class="t" style="left:2390.6px;top:500.7px;font-size:27px;font-weight:400;color:#717171;letter-spacing:0.68px;transform:scaleX(1.1229);-webkit-text-stroke:0.4px #717171;">Delivery Instruction</span>
<span class="t" style="left:2769.4px;top:500.7px;font-size:27px;font-weight:400;color:#717171;letter-spacing:0.68px;transform:scaleX(1.1778);-webkit-text-stroke:0.4px #717171;">Department</span>
<span class="t" style="left:3127.1px;top:500.7px;font-size:27px;font-weight:400;color:#717171;letter-spacing:0.68px;transform:scaleX(1.0633);-webkit-text-stroke:0.4px #717171;">Doc Link</span>
<span class="t" style="left:3405.4px;top:500.7px;font-size:27px;font-weight:400;color:#111;letter-spacing:0.68px;transform:scaleX(1.1029);-webkit-text-stroke:0.4px #111;">Delivery Details</span>
<span class="t" style="left:2161.7px;top:693.7px;font-size:24px;font-weight:400;color:#666666;letter-spacing:0.60px;-webkit-text-stroke:0.6px #666666;">Trip No</span>
<span class="t" style="left:2561.1px;top:693.7px;font-size:24px;font-weight:400;color:#666666;letter-spacing:0.50px;-webkit-text-stroke:0.6px #666666;">Driver Name</span>
<span class="t" style="left:2960.7px;top:693.7px;font-size:24px;font-weight:400;color:#666666;letter-spacing:0.53px;-webkit-text-stroke:0.6px #666666;">Vehicle No</span>
<span class="t" style="left:3558.6px;top:693.7px;font-size:24px;font-weight:400;color:#666666;letter-spacing:0.25px;-webkit-text-stroke:0.6px #666666;">Job Start Date</span>
</body></html>
